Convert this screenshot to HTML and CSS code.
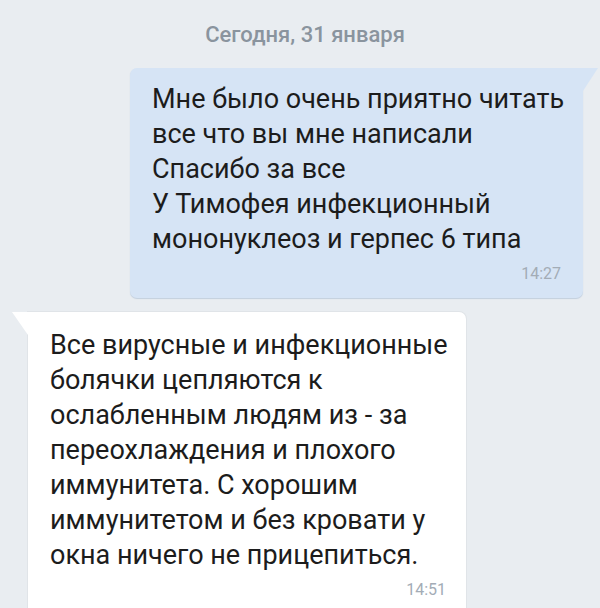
FILE: index.html
```html
<!DOCTYPE html>
<html lang="ru">

<head>
  <meta charset="UTF-8">
  <meta name="viewport" content="width=device-width, initial-scale=1.0">
  <title>Сообщения</title>
  <link rel="stylesheet" href="styles.css">
</head>

<body>
  <div class="chat">
    <div class="date">Сегодня, 31 января</div>

    <div class="msg msg-out">
      <div class="msg-text">Мне было очень приятно читать<br>все что вы мне написали<br>Спасибо за все<br>У Тимофея инфекционный<br>мононуклеоз и герпес 6 типа</div>
      <div class="msg-time">14:27</div>
    </div>

    <div class="msg msg-in">
      <div class="msg-text">Все вирусные и инфекционные<br>болячки цепляются к<br>ослабленным людям из - за<br>переохлаждения и плохого<br>иммунитета. С хорошим<br>иммунитетом и без кровати у<br>окна ничего не прицепиться.</div>
      <div class="msg-time">14:51</div>
    </div>
  </div>
</body>

</html>
```

FILE: styles.css
```css
body {
  margin: 0;
  padding: 0;
  background: #e9edf1;
  font-family: Roboto, 'Noto Sans', sans-serif;
  color: #1c1c1c;
}

.chat {
  display: flex;
  flex-direction: column;
  height: 608px;
  overflow: hidden;
}

.date {
  text-align: center;
  padding: 21px 0 0 10px;
  height: 45px;
  box-sizing: border-box;
  font-size: 22px;
  line-height: 28px;
  font-weight: 500;
  color: #8a949e;
}

.msg {
  position: relative;
  box-sizing: border-box;
  padding: 14px 18px 15px 22px;
  font-size: 27px;
  line-height: 35px;
  flex-shrink: 0;
}

.msg-text {
  white-space: nowrap;
}

.msg-out {
  align-self: flex-end;
  width: 453px;
  margin: 23px 17px 0 0;
  padding-right: 22px;
  background: #d6e4f5;
  border-radius: 7px 0 7px 7px;
  box-shadow: 0 1px 1px #c2cfdd;
}

.msg-out::after {
  content: "";
  position: absolute;
  top: 0;
  right: -15px;
  border-top: 23px solid #d6e4f5;
  border-right: 15px solid transparent;
}

.msg-in {
  align-self: flex-start;
  width: 438px;
  margin: 14px 0 0 28px;
  padding-top: 16px;
  padding-right: 20px;
  background: #fff;
  border-radius: 0 7px 7px 7px;
  box-shadow: 0 0 0 1px #e0e4e8;
}

.msg-in::before {
  content: "";
  position: absolute;
  top: 0;
  left: -16px;
  border-top: 23px solid #fff;
  border-left: 16px solid transparent;
}

.msg-time {
  text-align: right;
  font-size: 16px;
  line-height: 18px;
  color: #a3acb6;
  margin-top: 8px;
}
```
